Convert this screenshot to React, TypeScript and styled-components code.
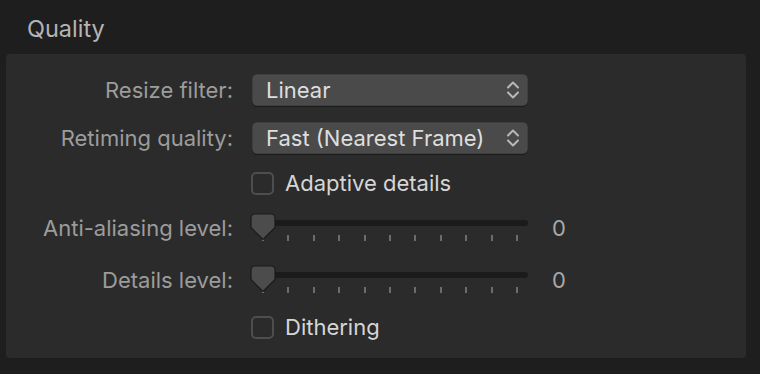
import styled, { createGlobalStyle } from 'styled-components';

const GlobalStyle = createGlobalStyle`
  html, body {
    margin: 0;
    padding: 0;
    background: #1e1e1e;
  }

  body {
    font-family: Inter, 'Noto Sans', 'Liberation Sans', sans-serif;
    -webkit-font-smoothing: antialiased;
  }
`;

const Page = styled.div`
  width: 760px;
  height: 374px;
  background: #1e1e1e;
  padding: 15px 14px 0 6px;
  box-sizing: border-box;
`;

const Title = styled.div`
  padding-left: 21px;
  height: 39px;
  font-size: 23.5px;
  line-height: 28px;
  color: #b4b4b4;
`;

const Panel = styled.div`
  width: 740px;
  height: 304px;
  box-sizing: border-box;
  background: #2b2b2b;
  border-radius: 4px;
  padding: 20px 0;
  display: flex;
  flex-direction: column;
`;

const Row = styled.div<{ $height: number; $gap: number }>`
  display: grid;
  grid-template-columns: 227px 276px auto;
  column-gap: 19px;
  align-items: center;
  height: ${(p) => p.$height}px;
  margin-top: ${(p) => p.$gap}px;
`;

const Label = styled.div`
  text-align: right;
  font-size: 22px;
  color: #9c9c9c;
  white-space: nowrap;
`;

const Popup = styled.div`
  height: 32px;
  box-sizing: border-box;
  border-radius: 5px;
  background: #4a4a4a;
  box-shadow: 0 1px 0 rgba(0, 0, 0, 0.35), inset 0 0 0 0.5px rgba(0, 0, 0, 0.3);
  display: flex;
  align-items: center;
  justify-content: space-between;
  padding: 0 8px 0 14px;
  font-size: 22px;
  color: #dedede;
  white-space: nowrap;
`;

const CheckRow = styled.label`
  display: flex;
  align-items: center;
  gap: 11px;
  margin-left: -1px;
  font-size: 22px;
  color: #d6d6d6;
  white-space: nowrap;
`;

const Box = styled.span`
  width: 23px;
  height: 23px;
  box-sizing: border-box;
  border: 2px solid #4e4e4e;
  border-radius: 5px;
  background: #2b2b2b;
`;

const Slider = styled.div`
  position: relative;
  height: 30px;
`;

const Track = styled.div`
  margin-top: 7px;
  height: 6px;
  border-radius: 3px;
  background: #1b1b1b;
`;

const Ticks = styled.div`
  display: flex;
  justify-content: space-between;
  padding: 0 10px;
  margin-top: 9px;
`;

const Tick = styled.span`
  width: 2px;
  height: 6px;
  background: #6c6c6c;
`;

const Thumb = styled.svg`
  position: absolute;
  left: -2px;
  top: 0;
`;

const Value = styled.div`
  padding-left: 5px;
  font-size: 22px;
  color: #a8a8a8;
`;

const Chevrons = () => (
  <svg width="14" height="22" viewBox="0 0 14 22" fill="none">
    <path d="M2 8.5L7 3.5L12 8.5" stroke="#b8b8b8" strokeWidth="2" strokeLinecap="round" strokeLinejoin="round" />
    <path d="M2 13.5L7 18.5L12 13.5" stroke="#b8b8b8" strokeWidth="2" strokeLinecap="round" strokeLinejoin="round" />
  </svg>
);

const LevelSlider = () => (
  <Slider>
    <Track />
    <Ticks>
      {Array.from({ length: 11 }).map((_, i) => (
        <Tick key={i} />
      ))}
    </Ticks>
    <Thumb width="26" height="27" viewBox="0 0 26 27">
      <path
        d="M5 1H21Q25 1 25 5V14.5L13 26.5L1 14.5V5Q1 1 5 1Z"
        fill="#4c4c4c"
        stroke="#1c1c1c"
        strokeWidth="1.2"
      />
    </Thumb>
  </Slider>
);

const App = () => {
  return (
    <>
      <GlobalStyle />
      <Page>
        <Title>Quality</Title>
        <Panel>
          <Row $height={32} $gap={0}>
            <Label>Resize filter:</Label>
            <Popup>
              Linear
              <Chevrons />
            </Popup>
          </Row>
          <Row $height={32} $gap={16}>
            <Label>Retiming quality:</Label>
            <Popup>
              Fast (Nearest Frame)
              <Chevrons />
            </Popup>
          </Row>
          <Row $height={23} $gap={16}>
            <span />
            <CheckRow>
              <Box />
              Adaptive details
            </CheckRow>
          </Row>
          <Row $height={30} $gap={20}>
            <Label>Anti-aliasing level:</Label>
            <LevelSlider />
            <Value>0</Value>
          </Row>
          <Row $height={30} $gap={22}>
            <Label>Details level:</Label>
            <LevelSlider />
            <Value>0</Value>
          </Row>
          <Row $height={23} $gap={19}>
            <span />
            <CheckRow>
              <Box />
              Dithering
            </CheckRow>
          </Row>
        </Panel>
      </Page>
    </>
  );
};

export default App;
